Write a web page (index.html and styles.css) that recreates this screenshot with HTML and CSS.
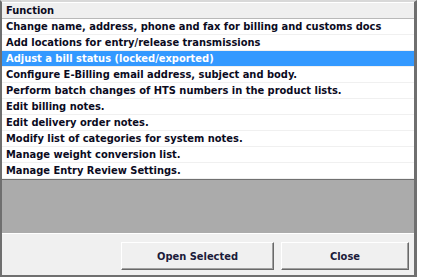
FILE: index.html
```html
<!DOCTYPE html>
<html lang="en">
<head>
  <meta charset="UTF-8" />
  <title>Functions</title>
  <link rel="stylesheet" href="styles.css">
</head>
<body>
  <div class="dialog">
    <div class="grid">
      <div class="grid-head">Function</div>
      <div class="row">Change name, address, phone and fax for billing and customs docs</div>
      <div class="row">Add locations for entry/release transmissions</div>
      <div class="row selected">Adjust a bill status (locked/exported)</div>
      <div class="row">Configure E-Billing email address, subject and body.</div>
      <div class="row">Perform batch changes of HTS numbers in the product lists.</div>
      <div class="row">Edit billing notes.</div>
      <div class="row">Edit delivery order notes.</div>
      <div class="row">Modify list of categories for system notes.</div>
      <div class="row">Manage weight conversion list.</div>
      <div class="row">Manage Entry Review Settings.</div>
    </div>
    <div class="empty"></div>
    <div class="footer">
      <button class="btn btn-open">Open Selected</button>
      <button class="btn btn-close">Close</button>
    </div>
  </div>
</body>
</html>
```

FILE: styles.css
```css
body {
  margin: 0;
  background: #ffffff;
  font-family: "DejaVu Sans Condensed", "DejaVu Sans", sans-serif;
  font-weight: bold;
  font-size: 11px;
  color: #0b0b1e;
}

.dialog {
  width: 417px;
  height: 277px;
  box-sizing: border-box;
  border: 2px solid #6f6f6f;
  border-right-width: 3px;
  border-top-color: #d8d8d8;
  background: #f0f0f0;
  display: flex;
  flex-direction: column;
}

.grid {
  background: #ffffff;
  padding-top: 1px;
  border-bottom: 1px solid #707070;
}

.grid-head {
  height: 15px;
  line-height: 15px;
  padding-left: 4px;
  background: #efefef;
  border-bottom: 1px solid #b9b9b9;
}

.row {
  height: 15px;
  line-height: 15px;
  padding-left: 4px;
  border-bottom: 1px solid #f0f0f0;
  white-space: nowrap;
}

.row.selected {
  background: #3399ff;
  color: #ffffff;
}

.empty {
  height: 53px;
  background: #ababab;
  border-bottom: 1px solid #ffffff;
}

.footer {
  flex: 1;
  display: flex;
  justify-content: flex-end;
  align-items: flex-start;
  gap: 7px;
  padding: 8px 5px 0 0;
}

.btn {
  height: 28px;
  font-family: inherit;
  font-weight: bold;
  font-size: 11px;
  color: #1b1b3a;
  background: #f0f0f0;
  border: 1px solid;
  border-color: #ffffff #696969 #696969 #ffffff;
  box-shadow: inset -1px -1px 0 #a0a0a0;
  padding: 0;
}

.btn-open {
  width: 153px;
}

.btn-close {
  width: 128px;
}
```
